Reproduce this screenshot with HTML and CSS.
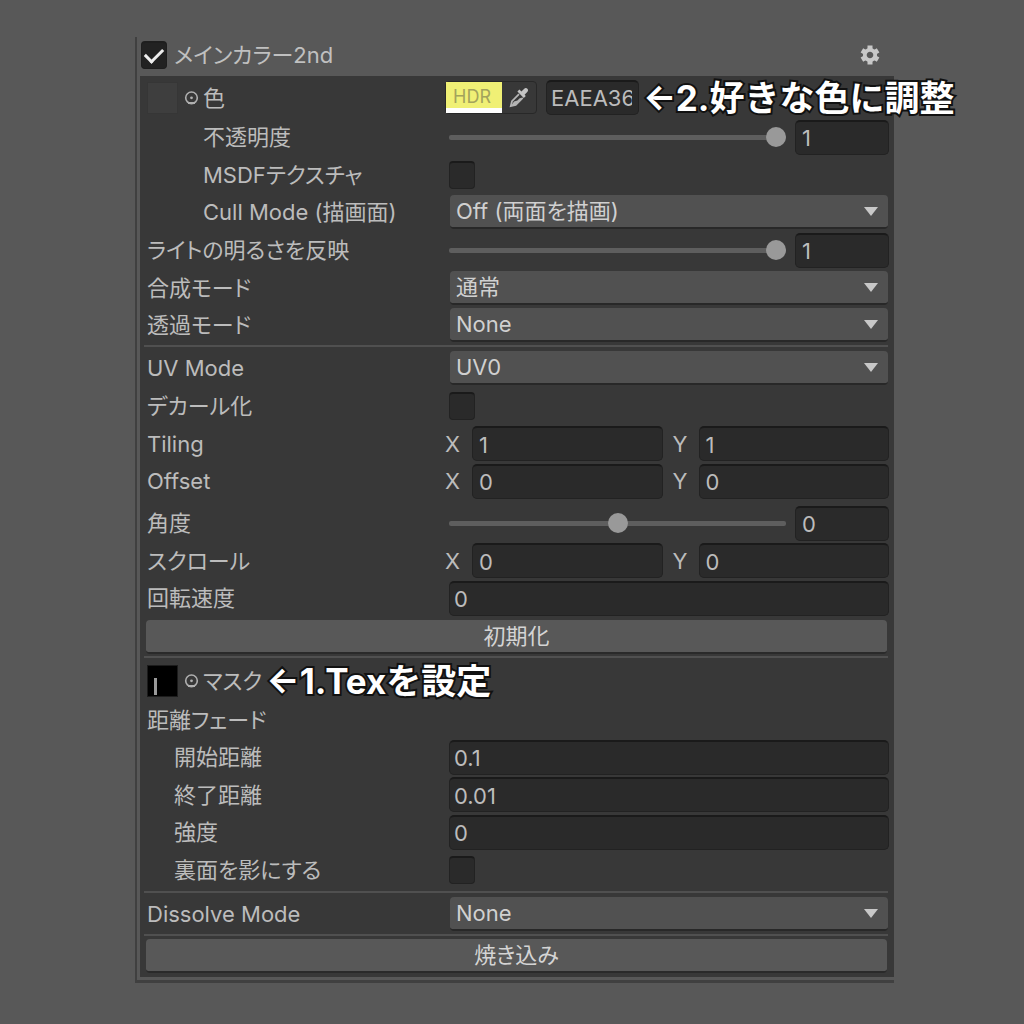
FILE: index.html
```
<!DOCTYPE html>
<html lang="ja">
<head>
  <meta charset="UTF-8">
  <meta name="viewport" content="width=device-width, initial-scale=1.0">
  <title>メインカラー2nd</title>
  <link rel="stylesheet" href="styles.css">
</head>
<body>
<main class="inspector">
  <header class="header">
    <input type="checkbox" class="toggle toggle-main" id="use-2nd" checked>
    <label class="title" for="use-2nd">メインカラー2nd</label>
    <button class="gear" aria-label="設定">
      <svg width="20" height="20" viewBox="0 0 20 20">
        <path fill="none" stroke="#c8c8c8" stroke-width="3.800" d="M10 4.800a5.200 5.200 0 1 0 0 10.400a5.200 5.200 0 1 0 0-10.400z"/>
        <path fill="none" stroke="#c8c8c8" stroke-width="5" d="M10 .6v4M10 15.4v4M1.9 5.3l3.4 2M14.7 12.7l3.4 2M18.1 5.3l-3.4 2M5.3 12.7l-3.4 2"/>
      </svg>
    </button>
  </header>

  <div class="panel">
    <!-- 色 -->
    <div class="row row-color">
      <div class="label texture-label">
        <button class="texture" aria-label="テクスチャ"></button>
        <svg class="picker" width="15" height="14" viewBox="0 0 15 14">
          <circle cx="7.5" cy="6.8" r="5.8" fill="none" stroke="#b0b0b0" stroke-width="1.6"/>
          <circle cx="7.5" cy="6.8" r="1.4" fill="#b0b0b0"/>
          <path d="M4 12h7" stroke="#b0b0b0" stroke-width="2"/>
        </svg>
        <label for="color-hex">色</label>
      </div>
      <div class="control color">
        <div class="color-box">
          <button class="hdr">HDR</button>
          <button class="eyedropper" aria-label="スポイト">
            <svg width="22" height="22" viewBox="0 0 22 22">
              <path fill="#c4c4c4" d="M13.4 4.6l2.6-2.7c1.1-1.1 2.5-1.1 3.4-.2s.9 2.3-.2 3.4l-2.6 2.6 1.2 1.3-2 2-6.4-6.4 2-2z"/>
              <path fill="none" stroke="#b4b4b4" stroke-width="1.8" d="M11 7.2l-7 7-1.2 4.9 4.9-1.2 7-7"/>
              <path fill="#b4b4b4" d="M6 14.5l3.4-1 2.6-2.6 2 .6-6.4 6.4-4.8 1.4z"/>
            </svg>
          </button>
        </div>
        <input type="text" class="field field-hex" id="color-hex" value="EAEA36">
        <span class="note">←2.好きな色に調整</span>
      </div>
    </div>
    <div class="row row-tall">
      <label class="label indent-2" for="alpha">不透明度</label>
      <div class="control slider">
        <input type="range" class="range" id="alpha" min="0" max="1" step="0.01" value="1">
        <input type="text" class="field" aria-label="不透明度の値" value="1">
      </div>
    </div>
    <div class="row">
      <label class="label indent-2" for="msdf">MSDFテクスチャ</label>
      <div class="control"><input type="checkbox" class="toggle" id="msdf"></div>
    </div>
    <div class="row row-tall">
      <label class="label indent-2" for="cull">Cull Mode (描画面)</label>
      <div class="control"><div class="dropdown"><select id="cull"><option>Off (両面を描画)</option></select></div></div>
    </div>
    <div class="row row-tall">
      <label class="label" for="lighting">ライトの明るさを反映</label>
      <div class="control slider">
        <input type="range" class="range" id="lighting" min="0" max="1" step="0.01" value="1">
        <input type="text" class="field" aria-label="明るさの値" value="1">
      </div>
    </div>
    <div class="row">
      <label class="label" for="blend">合成モード</label>
      <div class="control"><div class="dropdown"><select id="blend"><option>通常</option></select></div></div>
    </div>
    <div class="row">
      <label class="label" for="transparent">透過モード</label>
      <div class="control"><div class="dropdown"><select id="transparent"><option>None</option></select></div></div>
    </div>

    <hr class="divider">

    <!-- UV -->
    <div class="row row-tall">
      <label class="label" for="uv-mode">UV Mode</label>
      <div class="control"><div class="dropdown"><select id="uv-mode"><option>UV0</option></select></div></div>
    </div>
    <div class="row row-tall">
      <label class="label" for="decal">デカール化</label>
      <div class="control"><input type="checkbox" class="toggle" id="decal"></div>
    </div>
    <div class="row">
      <span class="label">Tiling</span>
      <div class="control vector">
        <label for="tiling-x">X</label>
        <input type="text" class="field" id="tiling-x" value="1">
        <label for="tiling-y">Y</label>
        <input type="text" class="field" id="tiling-y" value="1">
      </div>
    </div>
    <div class="row row-tall">
      <span class="label">Offset</span>
      <div class="control vector">
        <label for="offset-x">X</label>
        <input type="text" class="field" id="offset-x" value="0">
        <label for="offset-y">Y</label>
        <input type="text" class="field" id="offset-y" value="0">
      </div>
    </div>
    <div class="row row-tall row-spaced">
      <label class="label" for="angle">角度</label>
      <div class="control slider">
        <input type="range" class="range" id="angle" min="-180" max="180" value="0">
        <input type="text" class="field" aria-label="角度の値" value="0">
      </div>
    </div>
    <div class="row">
      <span class="label">スクロール</span>
      <div class="control vector">
        <label for="scroll-x">X</label>
        <input type="text" class="field" id="scroll-x" value="0">
        <label for="scroll-y">Y</label>
        <input type="text" class="field" id="scroll-y" value="0">
      </div>
    </div>
    <div class="row row-tall">
      <label class="label" for="rotate">回転速度</label>
      <div class="control"><input type="text" class="field" id="rotate" value="0"></div>
    </div>
    <button class="button">初期化</button>

    <hr class="divider">

    <!-- マスク -->
    <div class="row row-color">
      <div class="label texture-label">
        <button class="texture texture-mask" aria-label="マスクテクスチャ"></button>
        <svg class="picker" width="15" height="14" viewBox="0 0 15 14">
          <circle cx="7.5" cy="6.8" r="5.8" fill="none" stroke="#b0b0b0" stroke-width="1.6"/>
          <circle cx="7.5" cy="6.8" r="1.4" fill="#b0b0b0"/>
          <path d="M4 12h7" stroke="#b0b0b0" stroke-width="2"/>
        </svg>
        <span>マスク</span>
        <span class="note">←1.Texを設定</span>
      </div>
    </div>
    <div class="row">
      <span class="label">距離フェード</span>
    </div>
    <div class="row row-tall">
      <label class="label indent-1" for="fade-start">開始距離</label>
      <div class="control"><input type="text" class="field" id="fade-start" value="0.1"></div>
    </div>
    <div class="row">
      <label class="label indent-1" for="fade-end">終了距離</label>
      <div class="control"><input type="text" class="field" id="fade-end" value="0.01"></div>
    </div>
    <div class="row row-tall">
      <label class="label indent-1" for="strength">強度</label>
      <div class="control"><input type="text" class="field" id="strength" value="0"></div>
    </div>
    <div class="row row-tall">
      <label class="label indent-1" for="backface">裏面を影にする</label>
      <div class="control"><input type="checkbox" class="toggle" id="backface"></div>
    </div>

    <hr class="divider">

    <div class="row">
      <label class="label" for="dissolve">Dissolve Mode</label>
      <div class="control"><div class="dropdown"><select id="dissolve"><option>None</option></select></div></div>
    </div>

    <hr class="divider">

    <button class="button">焼き込み</button>
  </div>
</main>
</body>
</html>
```
FILE: styles.css
```
* {
  box-sizing: border-box;
}
body {
  margin: 0;
  padding: 37px 130px 42px 135px;
  background-color: #585858;
  color: #bcbcbc;
  font-family: Inter, "Noto Sans CJK JP", sans-serif;
  font-size: 22px;
  line-height: 30px;
  font-feature-settings: "palt";
}
button, input, select {
  margin: 0;
  padding: 0;
  border: none;
  font: inherit;
  font-feature-settings: inherit;
  color: inherit;
}
.inspector {
  padding: 0 0 3px 3px;
  border-left: 2px solid #404040;
  border-bottom: 3px solid #404040;
}
.header {
  display: flex;
  align-items: center;
  height: 39px;
  padding: 0 14px 3px 1px;
}
.title {
  flex: 1;
  margin-left: 7px;
  color: #c0c0c0;
}
.gear {
  display: flex;
  background: none;
}
.panel {
  padding: 1px 5px 3px 4px;
  background-color: #383838;
}
.row {
  display: grid;
  grid-template-columns: 298px 1fr;
  align-items: center;
  min-height: 37px;
  padding-left: 3px;
}
.row-tall {
  min-height: 38px;
}
.row-color {
  min-height: 41px;
}
.row-spaced {
  margin-top: 4px;
}
.label {
  white-space: nowrap;
}
.indent-1 {
  padding-left: 27px;
}
.indent-2 {
  padding-left: 56px;
}
.control {
  display: flex;
  align-items: center;
  min-width: 0;
  padding-left: 4px;
}

/* 入力欄 */
.field {
  width: 100%;
  min-width: 0;
  height: 35px;
  padding: 1px 4px 0;
  border: 1px solid #222;
  border-top: 2px solid #1a1a1a;
  border-radius: 5px;
  background-color: #2a2a2a;
}
.slider {
  gap: 9px;
}
.slider .field {
  flex: 0 0 94px;
  padding: 1px 6px 0;
}
.vector {
  display: grid;
  grid-template-columns: 27px 1fr 36px 1fr;
  padding-left: 0;
}
.vector label + input + label {
  padding-left: 10px;
}
.vector .field {
  padding: 1px 6px 0;
}

/* スライダー */
.range {
  flex: 1;
  min-width: 0;
  height: 20px;
  appearance: none;
  background: none;
}
.range::-webkit-slider-runnable-track {
  height: 5px;
  border-radius: 2px;
  background-color: #5e5e5e;
}
.range::-webkit-slider-thumb {
  appearance: none;
  width: 20px;
  height: 20px;
  margin-top: -8px;
  border-radius: 50%;
  background-color: #999;
}

/* チェックボックス */
.toggle {
  display: grid;
  place-items: center;
  width: 26px;
  height: 28px;
  appearance: none;
  border: 1px solid #222;
  border-top: 2px solid #1a1a1a;
  border-radius: 4px;
  background-color: #2a2a2a;
}
.toggle:checked::before {
  content: "";
  width: 15px;
  height: 8px;
  margin-bottom: 5px;
  border-left: 3px solid #eee;
  border-bottom: 3px solid #eee;
  transform: rotate(-45deg);
}
.toggle-main {
  border-color: #1e1e1e;
  background-color: #222;
}

/* ドロップダウン */
.dropdown {
  position: relative;
  width: 100%;
  padding: 0 1px;
}
.dropdown select {
  display: block;
  width: 100%;
  height: 34px;
  padding: 0 30px 0 6px;
  appearance: none;
  border-bottom: 2px solid #282828;
  border-radius: 4px;
  background-color: #515151;
  color: #d0d0d0;
}
.dropdown::after {
  content: "";
  position: absolute;
  top: 12px;
  right: 11px;
  border: 7px solid transparent;
  border-top: 9px solid #c8c8c8;
  border-bottom: none;
  pointer-events: none;
}

.button {
  display: block;
  width: calc(100% - 4px);
  height: 34px;
  margin: 3px 2px 1px;
  border-bottom: 2px solid #2a2a2a;
  border-radius: 4px;
  background-color: #585858;
  color: #d4d4d4;
}
.divider {
  height: 2px;
  margin: 2px 1px 2px 0;
  border: none;
  background-color: #505050;
}

/* テクスチャ */
.texture-label {
  display: flex;
  align-items: center;
}
.texture {
  flex: none;
  width: 31px;
  height: 32px;
  border: 1px solid #363636;
  background-color: #3e3e3e;
}
.texture-mask {
  border-color: #1c1c1c;
  background: linear-gradient(#999, #999) 6px 12px / 3px 17px no-repeat #000;
}
.picker {
  flex: none;
  margin: 0 4px 0 6px;
}

/* カラー */
.color {
  padding-left: 0;
}
.color-box {
  display: flex;
  flex: 0 0 92px;
  height: 33px;
  margin-right: 9px;
  border: 1px solid #282828;
  border-radius: 4px;
}
.hdr {
  width: 56px;
  padding: 3px 4px 0 0;
  border-bottom: 5px solid #fff;
  background-color: #f0f075;
  color: #a3a35c;
  font-size: 18px;
  line-height: 22px;
}
.eyedropper {
  display: flex;
  flex: 1;
  align-items: center;
  justify-content: center;
  background: none;
}
.field-hex {
  flex: 0 0 93px;
  padding: 0 6px 0 4px;
}

/* 説明 */
.note {
  margin-left: 4px;
  color: #fff;
  font-size: 35px;
  font-weight: 700;
  font-feature-settings: normal;
  line-height: 38px;
  white-space: nowrap;
  -webkit-text-stroke: 4px #111;
  paint-order: stroke fill;
}
```
